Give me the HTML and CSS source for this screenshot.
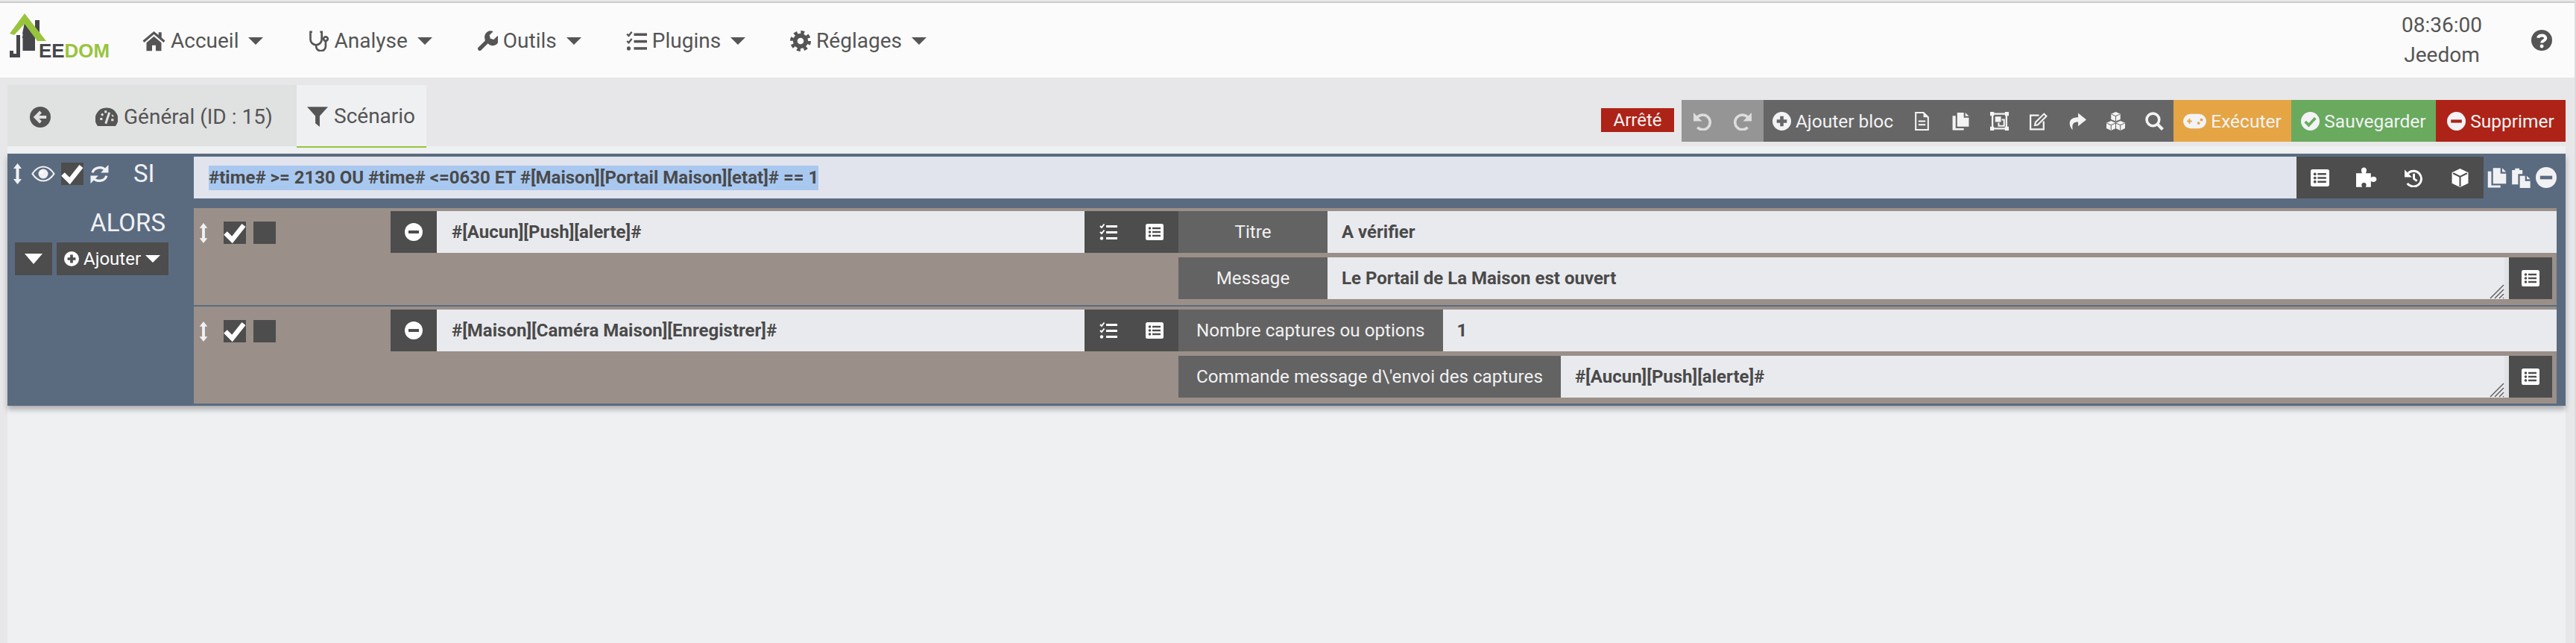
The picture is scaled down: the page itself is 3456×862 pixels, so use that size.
FILE: index.html
```html
<!DOCTYPE html>
<html lang="fr">
<head>
<meta charset="utf-8">
<title>Jeedom - Scénario</title>
<link rel="stylesheet" href="styles.css">
</head>
<body>
<svg class="defs" width="0" height="0" aria-hidden="true">
  <symbol id="i-home" viewBox="0 0 24 24"><path d="M12 1.5 0 11.5l1.6 2L12 4.8l10.4 8.7 1.6-2-3.8-3.2V2.5h-3.2v3.1zM12 7 4 13.7V22.5h6v-6h4v6h6v-8.8z"/></symbol>
  <symbol id="i-stetho" viewBox="0 0 24 24"><g class="ln" stroke-width="2.3"><path d="M5 1.5H3v8.5a6.5 6.5 0 0 0 13 0V1.5h-2"/><path d="M9.5 16.5v1.5a5.5 5.5 0 0 0 11 0v-5.5"/><circle cx="20.5" cy="9.5" r="2.4"/></g></symbol>
  <symbol id="i-wrench" viewBox="0 0 24 24"><path d="M23.5 6l-4.2 4.2-4-.9-1-4L18.5 1A7 7 0 0 0 9 9.5a7 7 0 0 0 .3 2L1.3 19.5a2.3 2.3 0 0 0 3.2 3.2l8-8A7 7 0 0 0 23.5 6z"/></symbol>
  <symbol id="i-tasks" viewBox="0 0 24 24"><g class="ln" stroke-width="2"><path d="M1 4l2 2 3.5-4.5"/><path d="M1 12l2 2 3.5-4.5"/></g><circle cx="3" cy="20.5" r="2.2"/><rect x="9" y="3" width="15" height="3"/><rect x="9" y="11" width="15" height="3"/><rect x="9" y="19" width="15" height="3"/></symbol>
  <symbol id="i-cog" viewBox="0 0 24 24"><circle class="ln" cx="12" cy="12" r="6.2" stroke-width="5"/><circle class="ln" cx="12" cy="12" r="10" stroke-width="4" stroke-dasharray="4 3.85"/></symbol>
  <symbol id="i-back" viewBox="0 0 24 24"><circle cx="12" cy="12" r="12"/><path class="ko" stroke-width="3.4" d="M19 12H7M12.5 6 6.5 12l6 6"/></symbol>
  <symbol id="i-tacho" viewBox="0 0 24 24"><path d="M12 2A12 12 0 0 0 2.4 21.5h19.2A12 12 0 0 0 12 2z"/><path class="ko" stroke-width="2.4" d="M11 19 15 7M5 14h2.5M6.5 8.5l1.7 1.7M11 5v2.5M19 10l-1 1M19.5 15H17"/></symbol>
  <symbol id="i-filter" viewBox="0 0 24 24"><path d="M0 1h24L14.500 11.500V24L9.500 20V11.500z"/></symbol>
  <symbol id="i-undo" viewBox="0 0 24 24"><path class="ln" stroke-width="3.400" d="M5 8a9.500 9.500 0 1 1 1 12"/><path d="M1 1v11h11z"/></symbol>
  <symbol id="i-redo" viewBox="0 0 24 24"><path class="ln" stroke-width="3.400" d="M19 8a9.500 9.500 0 1 0-1 12"/><path d="M23 1v11H12z"/></symbol>
  <symbol id="i-plus" viewBox="0 0 24 24"><circle cx="12" cy="12" r="12"/><path class="ko" stroke-width="4.400" d="M12 5.500v13M5.500 12h13"/></symbol>
  <symbol id="i-minus" viewBox="0 0 24 24"><circle cx="12" cy="12" r="12"/><path class="ko" stroke-width="4" d="M5 12h14"/></symbol>
  <symbol id="i-okc" viewBox="0 0 24 24"><circle cx="12" cy="12" r="12"/><path class="ko" stroke-width="3.600" d="M5.500 12.500l4.500 4.500 8.500-9"/></symbol>
  <symbol id="i-help" viewBox="0 0 24 24"><circle cx="12" cy="12" r="12"/><path class="ko" stroke-width="3.400" d="M7.800 9.200C8.200 5.500 16.500 5.300 16.500 9.500c0 3-4.400 2.800-4.400 5.500"/><circle class="kof" cx="12.100" cy="18.800" r="2.100"/></symbol>
  <symbol id="i-file" viewBox="0 0 24 24"><path class="ln" stroke-width="2" d="M4 1h10l6 6v16H4z"/><path d="M14 1l6 6h-6z"/><rect x="7.500" y="11" width="9" height="2"/><rect x="7.500" y="15.500" width="9" height="2"/></symbol>
  <symbol id="i-copy" viewBox="0 0 24 24"><path d="M7.500 1H16v6.500h6.500V19H7.500zM18 1l4.500 4.500H18zM1.500 5H5.500v16H16v2.500H1.500z"/></symbol>
  <symbol id="i-paste" viewBox="0 0 24 24"><path d="M1 3.500h3.500V1.500h5v2h3.500V8H8v12H1zM10 10h6v6h6v8H10zM18 10l4 4h-4z"/></symbol>
  <symbol id="i-ungroup" viewBox="0 0 24 24"><path class="ln" stroke-width="2.200" d="M3 2.500h18v19H3z"/><path d="M0 0h5v5H0zM19 0h5v5h-5zM0 19h5v5H0zM19 19h5v5h-5zM6.500 6H14v7H6.500z"/><path class="ln" stroke-width="2" d="M11 14v4h7v-8h-3"/></symbol>
  <symbol id="i-edit" viewBox="0 0 24 24"><path class="ln" stroke-width="2.200" d="M13 4.500H2v18h17V12"/><path class="ln" stroke-width="2" d="M8.500 13.500 19.500 2.500l3 3-11 11-3.800.8z"/></symbol>
  <symbol id="i-share" viewBox="0 0 24 24"><path d="M13.500 1.500 24 10l-10.500 8.500V13C8 13 5 15 6.500 23 1.500 19 -1 7 13.500 7z"/></symbol>
  <symbol id="i-cubes" viewBox="0 0 24 24"><path d="M12 0l6 2.600v6.900L12 12 6 9.500V2.600zM6 11.500l6 2.600 6-2.600 6 2.600v7L18 24l-6-2.900L6 24l-6-2.900v-7z"/><path class="ko" stroke-width="1" d="M6.500 3 12 5.500 17.500 3M12 5.500V11.500M.5 14.500 6 17l5.500-2.500M6 17v6.500M12.500 14.500 18 17l5.500-2.500M18 17v6.500M12 14v7"/></symbol>
  <symbol id="i-search" viewBox="0 0 24 24"><circle class="ln" cx="10" cy="10" r="8" stroke-width="3.500"/><path class="ln" stroke-width="4" d="M15.500 15.500 22.500 22.500"/></symbol>
  <symbol id="i-game" viewBox="0 0 24 24"><rect y="4.500" width="24" height="15" rx="7.500"/><path class="ko" stroke-width="1.600" d="M4 12h5M6.500 9.500v5"/><circle class="kof" cx="16" cy="14" r="1.500"/><circle class="kof" cx="19" cy="10.500" r="1.500"/></symbol>
  <symbol id="i-listalt" viewBox="0 0 24 24"><rect y="1" width="24" height="22" rx="2.500"/><g class="kof"><circle cx="5.500" cy="7" r="1.800"/><circle cx="5.500" cy="12" r="1.800"/><circle cx="5.500" cy="17" r="1.800"/><rect x="9" y="5.800" width="11" height="2.400"/><rect x="9" y="10.800" width="11" height="2.400"/><rect x="9" y="15.800" width="11" height="2.400"/></g></symbol>
  <symbol id="i-puzzle" viewBox="0 0 24 24"><path d="M0 7h7C5 4 6 .5 9 .5s4 3.500 2 6.500h6v5c3-2 6.500-1 6.500 2s-3.500 4-6.500 2v7h-6c1.500-3 .5-5-2-5s-3.500 2-2 5H0z"/></symbol>
  <symbol id="i-history" viewBox="0 0 24 24"><path class="ln" stroke-width="2.800" d="M5.500 6A10 10 0 1 1 4.500 19"/><path d="M1 1.500v9.500h9.500z"/><path class="ln" stroke-width="2.800" d="M13 6.500v6.500l4 3"/></symbol>
  <symbol id="i-cube" viewBox="0 0 24 24"><path d="M12 0l10.500 5v14L12 24 1.500 19V5z"/><path class="ko" stroke-width="2" d="M3 6l9 4.500L21 6M12 10.500V23"/></symbol>
  <symbol id="i-updown" viewBox="0 0 12 28"><path d="M6 0l5.500 7H8v14h3.500L6 28 .5 21H4V7H.5z"/></symbol>
  <symbol id="i-eye" viewBox="0 0 32 22"><path class="ln" stroke-width="2.200" d="M1.500 11C6 4 11 1.500 16 1.500S26 4 30.500 11C26 18 21 20.500 16 20.500S6 18 1.500 11z"/><circle cx="16" cy="11" r="6.500"/><circle class="kof" cx="13.500" cy="8.500" r="2.500"/></symbol>
  <symbol id="i-sync" viewBox="0 0 24 24"><path class="ln" stroke-width="3.200" d="M3 10C5 2.500 15.500 1.500 20 7M21 14c-2 7.500-12.500 8.500-17 3"/><path d="M23.500 0v10h-10zM.5 24V14h10z"/></symbol>
  <symbol id="i-check" viewBox="0 0 30 30"><path class="ln" stroke-width="6.400" d="M2.500 15.500l9 9L27 5"/></symbol>
</svg>

<header class="navbar">
  <a class="brand" href="#">
    <svg class="logo" viewBox="0 0 150 62" role="img" aria-label="Jeedom">
      <path class="logo-dark" d="M21 12 35 28V50H18V27zM35 9h6V30L35 24z"/>
      <path class="logo-dark" d="M10 29h5V59H1V50H6V54H10z"/>
      <rect class="logo-white" x="15" y="33" width="3.500" height="20"/>
      <rect class="logo-white" x="15" y="27" width="3.500" height="3.500"/>
      <path class="logo-green" d="M21 0 50 37H38L21 14 7 29 1 27z"/>
      <text class="logo-text" x="40" y="59" textLength="95" lengthAdjust="spacingAndGlyphs"><tspan class="logo-ee">EE</tspan><tspan class="logo-dom">DOM</tspan></text>
    </svg>
  </a>
  <nav class="menu">
    <a class="menu-item" href="#"><svg class="ic ic-home"><use href="#i-home"/></svg>Accueil<i class="caret"></i></a>
    <a class="menu-item" href="#"><svg class="ic ic-nav"><use href="#i-stetho"/></svg>Analyse<i class="caret"></i></a>
    <a class="menu-item" href="#"><svg class="ic ic-nav"><use href="#i-wrench"/></svg>Outils<i class="caret"></i></a>
    <a class="menu-item" href="#"><svg class="ic ic-nav"><use href="#i-tasks"/></svg>Plugins<i class="caret"></i></a>
    <a class="menu-item" href="#"><svg class="ic ic-nav"><use href="#i-cog"/></svg>Réglages<i class="caret"></i></a>
  </nav>
  <div class="clock"><div>08:36:00</div><div>Jeedom</div></div>
  <a class="help" href="#"><svg class="ic ic-help"><use href="#i-help"/></svg></a>
</header>

<main class="page">
  <div class="tabbar">
    <ul class="tabs">
      <li class="tab tab-back"><svg class="ic ic-back"><use href="#i-back"/></svg></li>
      <li class="tab tab-general"><svg class="ic ic-tacho"><use href="#i-tacho"/></svg>Général (ID : 15)</li>
      <li class="tab tab-active"><svg class="ic ic-filter"><use href="#i-filter"/></svg>Scénario</li>
    </ul>
    <span class="badge">Arrêté</span>
    <div class="toolbar">
      <div class="tb-group tb-muted">
        <button class="tb-icon tb-wide"><svg class="ic ic-tb"><use href="#i-undo"/></svg></button>
        <button class="tb-icon tb-wide"><svg class="ic ic-tb"><use href="#i-redo"/></svg></button>
      </div>
      <div class="tb-group tb-dark">
        <button class="tb-text tb-add"><svg class="ic ic-tb"><use href="#i-plus"/></svg>Ajouter bloc</button>
        <button class="tb-icon"><svg class="ic ic-tb"><use href="#i-file"/></svg></button>
        <button class="tb-icon"><svg class="ic ic-tb"><use href="#i-copy"/></svg></button>
        <button class="tb-icon"><svg class="ic ic-tb"><use href="#i-ungroup"/></svg></button>
        <button class="tb-icon"><svg class="ic ic-tb"><use href="#i-edit"/></svg></button>
        <button class="tb-icon"><svg class="ic ic-tb"><use href="#i-share"/></svg></button>
        <button class="tb-icon"><svg class="ic ic-tb"><use href="#i-cubes"/></svg></button>
        <button class="tb-icon"><svg class="ic ic-tb"><use href="#i-search"/></svg></button>
      </div>
      <button class="tb-text tb-run"><svg class="ic ic-game"><use href="#i-game"/></svg>Exécuter</button>
      <button class="tb-text tb-save"><svg class="ic ic-tb"><use href="#i-okc"/></svg>Sauvegarder</button>
      <button class="tb-text tb-del"><svg class="ic ic-tb"><use href="#i-minus"/></svg>Supprimer</button>
    </div>
  </div>

  <section class="panel">
    <div class="block">
      <div class="cond">
        <div class="cond-left">
          <svg class="ic ic-drag"><use href="#i-updown"/></svg>
          <svg class="ic ic-eye"><use href="#i-eye"/></svg>
          <span class="box"><svg class="ic ic-check"><use href="#i-check"/></svg></span>
          <svg class="ic ic-sync"><use href="#i-sync"/></svg>
          <span class="si">SI</span>
        </div>
        <div class="expr"><span class="selected">#time# &gt;= 2130 OU #time# &lt;=0630 ET #[Maison][Portail Maison][etat]# == 1</span></div>
        <div class="expr-btns">
          <span class="eb"><svg class="ic ic-eb"><use href="#i-listalt"/></svg></span>
          <span class="eb"><svg class="ic ic-puz"><use href="#i-puzzle"/></svg></span>
          <span class="eb"><svg class="ic ic-eb"><use href="#i-history"/></svg></span>
          <span class="eb"><svg class="ic ic-eb"><use href="#i-cube"/></svg></span>
        </div>
        <div class="block-tools">
          <svg class="ic ic-bt"><use href="#i-copy"/></svg>
          <svg class="ic ic-bt"><use href="#i-paste"/></svg>
          <svg class="ic ic-bm"><use href="#i-minus"/></svg>
        </div>
      </div>
      <div class="then">
        <div class="then-left">
          <div class="alors">ALORS</div>
          <div class="then-btns">
            <span class="tbtn tbtn-caret"><i class="caret caret-big"></i></span>
            <span class="tbtn tbtn-add"><svg class="ic ic-add"><use href="#i-plus"/></svg>Ajouter<i class="caret caret-add"></i></span>
          </div>
        </div>
        <div class="actions">
          <div class="action">
            <div class="act-ctl">
              <svg class="ic ic-drag"><use href="#i-updown"/></svg>
              <span class="box box-a"><svg class="ic ic-check"><use href="#i-check"/></svg></span>
              <span class="box box-b"></span>
            </div>
            <span class="rm"><svg class="ic ic-rm"><use href="#i-minus"/></svg></span>
            <div class="cmd">#[Aucun][Push][alerte]#</div>
            <div class="cmd-btns">
              <svg class="ic ic-cb"><use href="#i-tasks"/></svg>
              <svg class="ic ic-cb"><use href="#i-listalt"/></svg>
            </div>
            <div class="params">
              <div class="param">
                <label class="lbl lbl-fixed">Titre</label>
                <div class="val">A vérifier</div>
              </div>
              <div class="param">
                <label class="lbl lbl-fixed">Message</label>
                <div class="val val-area">Le Portail de La Maison est ouvert
                  <svg class="grip" viewBox="0 0 20 20"><path d="M19 1 1 19M19 7 7 19M19 13 13 19M19 18 18 19"/></svg>
                </div>
                <span class="side"><svg class="ic ic-side"><use href="#i-listalt"/></svg></span>
              </div>
            </div>
          </div>
          <div class="action action-next">
            <div class="act-ctl">
              <svg class="ic ic-drag"><use href="#i-updown"/></svg>
              <span class="box box-a"><svg class="ic ic-check"><use href="#i-check"/></svg></span>
              <span class="box box-b"></span>
            </div>
            <span class="rm"><svg class="ic ic-rm"><use href="#i-minus"/></svg></span>
            <div class="cmd">#[Maison][Caméra Maison][Enregistrer]#</div>
            <div class="cmd-btns">
              <svg class="ic ic-cb"><use href="#i-tasks"/></svg>
              <svg class="ic ic-cb"><use href="#i-listalt"/></svg>
            </div>
            <div class="params">
              <div class="param">
                <label class="lbl">Nombre captures ou options</label>
                <div class="val">1</div>
              </div>
              <div class="param">
                <label class="lbl">Commande message d\'envoi des captures</label>
                <div class="val val-area">#[Aucun][Push][alerte]#
                  <svg class="grip" viewBox="0 0 20 20"><path d="M19 1 1 19M19 7 7 19M19 13 13 19M19 18 18 19"/></svg>
                </div>
                <span class="side"><svg class="ic ic-side"><use href="#i-listalt"/></svg></span>
              </div>
            </div>
          </div>
        </div>
      </div>
    </div>
  </section>
</main>
</body>
</html>
```

FILE: styles.css
```css
* { box-sizing: border-box; }
html, body { margin: 0; height: 100%; }
body {
  background: #e7e7e9;
  color: #555;
  font-family: Roboto, "Liberation Sans", sans-serif;
  font-size: 24px;
  overflow: hidden;
  display: flex;
  flex-direction: column;
  border-right: 2px solid #dcdcdc;
  --ko: #fff;
}
.defs { position: absolute; }
.ic { display: block; flex: none; fill: currentColor; }
.ln { fill: none; stroke: currentColor; }
.ko { fill: none; stroke: var(--ko); }
.kof { fill: var(--ko); }
a { color: inherit; text-decoration: none; }
button { border: 0; margin: 0; padding: 0; font: inherit; color: inherit; background: none; }

/* navbar */
.navbar {
  flex: none;
  height: 102px;
  margin-top: 2px;
  border-top: 2px solid #ccc;
  background: #fbfbfb;
  display: flex;
  align-items: center;
  padding-left: 12px;
  padding-right: 30px;
  font-size: 28px;
}
.brand { display: block; flex: none; width: 150px; height: 62px; margin-top: -10px; }
.logo { display: block; width: 150px; height: 62px; overflow: visible; }
.logo-dark { fill: #47464b; }
.logo-white { fill: #fbfbfb; }
.logo-green { fill: #98c43c; }
.logo-text { font-family: "Liberation Sans", sans-serif; font-weight: 700; font-size: 25px; }
.logo-ee { fill: #47464b; }
.logo-dom { fill: #98c43c; }
.menu { display: flex; gap: 60px; margin-left: 29px; margin-top: 2px; flex: 1; }
.menu-item { display: flex; align-items: center; gap: 7px; line-height: 40px; }
.ic-nav { width: 28px; height: 28px; }
.ic-home { width: 31px; height: 30px; }
.caret {
  display: block;
  flex: none;
  width: 0; height: 0;
  margin-left: 6px;
  border-left: 10px solid transparent;
  border-right: 10px solid transparent;
  border-top: 10px solid currentColor;
}
.clock { width: 110px; text-align: center; line-height: 40px; font-size: 28px; margin-right: 65px; white-space: nowrap; }
.help { display: block; }
.ic-help { width: 28px; height: 28px; }

/* tab bar */
.page { flex: 1; display: flex; flex-direction: column; padding: 10px 12px 0 10px; min-height: 0; }
.tabbar { flex: none; display: flex; align-items: flex-start; height: 82px; }
.tabs { display: flex; list-style: none; margin: 0 auto 0 0; padding: 0; height: 82px; background: #e0e1e1; font-size: 28px; }
.tab { display: flex; align-items: center; gap: 8px; height: 82px; padding-top: 3px; --ko: #e0e1e1; }
.tab-back { width: 118px; padding-left: 30px; }
.tab-general { width: 270px; }
.tab-active {
  position: relative;
  z-index: 1;
  width: 174px;
  height: 84px;
  padding: 3px 14px 2px 14px;
  background: #eff0f2;
  border-bottom: 2px solid #98c43c;
  --ko: #eff0f2;
}
.ic-back { width: 28px; height: 28px; }
.ic-tacho { width: 30px; height: 30px; }
.ic-filter { width: 28px; height: 28px; }
.badge {
  margin: 31px 10px 0 0;
  width: 98px; height: 32px;
  line-height: 32px;
  text-align: center;
  background: #ae2317;
  color: #f2f2f2;
  font-size: 24px;
}
.toolbar { display: flex; height: 56px; margin-top: 20px; color: #f3f3f5; font-size: 24.5px; }
.tb-group { display: flex; height: 56px; }
.tb-muted { background: #959595; color: #ddd; }
.tb-dark { background: #666; --ko: #666; }
.tb-icon { display: flex; align-items: center; justify-content: center; width: 52px; height: 56px; }
.tb-wide { width: 55px; }
.tb-text { display: flex; align-items: center; justify-content: center; gap: 6px; height: 56px; padding-top: 1px; }
.ic-tb { width: 25px; height: 25px; }
.ic-game { width: 31px; height: 31px; }
.tb-add { width: 186px; --ko: #666; }
.tb-run { width: 158px; background: #e5a545; --ko: #e5a545; }
.tb-save { width: 194px; background: #69aa5e; --ko: #69aa5e; }
.tb-del { width: 174px; background: #ae2317; --ko: #ae2317; }

/* scenario block */
.panel { flex: 1; background: #eff0f2; padding-top: 10px; }
.block { background: #5a6b80; padding: 4px 12px 3px 0; box-shadow: 0 5px 7px rgba(0, 0, 0, .28); color: #f1f1f4; }
.cond { display: flex; height: 56px; }
.cond-left { flex: none; width: 250px; height: 30px; margin-top: 8px; padding-left: 7px; display: flex; align-items: center; }
.ic-drag { width: 13px; height: 28px; }
.ic-eye { width: 32px; height: 22px; margin-left: 12px; }
.box { display: flex; align-items: center; justify-content: center; width: 30px; height: 30px; background: #4d4d4d; color: #fff; flex: none; }
.cond-left .box { margin-left: 8px; }
.ic-check { width: 30px; height: 30px; }
.ic-sync { width: 25px; height: 25px; margin-left: 9px; }
.si { margin-left: 33px; font-size: 33px; line-height: 30px; }
.expr { flex: 1; background: #e1e4ec; padding: 12px 0 0 20px; color: #4a4a4a; }
.selected { display: inline-block; background: #a9c8f0; height: 33px; line-height: 33px; font-weight: 700; font-size: 24px; white-space: nowrap; }
.expr-btns { flex: none; width: 251px; display: flex; background: #4d4d4d; color: #fff; --ko: #4d4d4d; }
.eb { flex: 1; display: flex; align-items: center; justify-content: center; }
.ic-eb { width: 25px; height: 25px; }
.ic-puz { width: 28px; height: 28px; }
.block-tools { flex: none; width: 98px; display: flex; align-items: center; gap: 5px; padding-left: 4px; --ko: #5a6b80; }
.ic-bt { width: 28px; height: 28px; }
.ic-bm { width: 28px; height: 28px; }

.then { display: flex; margin-top: 13px; }
.then-left { flex: none; width: 250px; padding-left: 10px; }
.alors { text-align: right; padding-right: 38px; font-size: 33px; line-height: 40px; }
.then-btns { display: flex; gap: 6px; margin-top: 6px; }
.tbtn { display: flex; align-items: center; height: 44px; background: #4d4d4d; color: #fff; --ko: #4d4d4d; }
.tbtn-caret { width: 50px; justify-content: center; }
.caret-big { margin: 0; border-left-width: 12px; border-right-width: 12px; border-top-width: 14px; }
.tbtn-add { width: 150px; padding-left: 10px; font-size: 24px; gap: 6px; }
.ic-add { width: 20px; height: 20px; }
.caret-add { margin-left: 0; }

.actions { flex: 1; min-width: 0; }
.action { display: flex; align-items: flex-start; background: #9a9089; padding: 4px 0 8px; }
.action-next { border-top: 2px solid #5a6b80; }
.act-ctl { flex: none; width: 264px; display: flex; align-items: center; padding: 14px 0 0 7px; }
.act-ctl .ic-drag { width: 12px; height: 27px; }
.box-a { margin-left: 21px; }
.box-b { margin-left: 10px; }
.rm { flex: none; width: 62px; height: 56px; display: flex; align-items: center; justify-content: center; background: #4d4d4d; color: #fff; --ko: #4d4d4d; }
.ic-rm { width: 24px; height: 24px; }
.cmd { flex: none; width: 869px; height: 56px; line-height: 56px; padding-left: 20px; background: #e9eaee; color: #4a4a4a; font-weight: 700; font-size: 24px; }
.cmd-btns { flex: none; width: 126px; height: 56px; display: flex; align-items: center; gap: 38px; padding-left: 20px; background: #4d4d4d; color: #fff; --ko: #4d4d4d; }
.ic-cb { width: 24px; height: 24px; }
.params { flex: 1; min-width: 0; display: flex; flex-direction: column; gap: 6px; }
.param { display: flex; height: 56px; }
.lbl { flex: none; padding: 0 24px; line-height: 56px; background: #636363; color: #f1f1f1; font-size: 24.2px; white-space: nowrap; }
.lbl-fixed { width: 200px; padding: 0; text-align: center; }
.val { flex: 1; min-width: 0; position: relative; line-height: 56px; padding-left: 19px; background: #e9eaee; color: #4a4a4a; font-weight: 700; font-size: 24px; }
.val-area { border-right: 6px solid #e0e2e6; }
.grip { position: absolute; right: 0; bottom: 0; width: 20px; height: 20px; fill: none; stroke: #666; stroke-width: 1.6; }
.side { flex: none; width: 58px; margin-right: 6px; display: flex; align-items: center; justify-content: center; background: #4d4d4d; color: #fff; --ko: #4d4d4d; }
.ic-side { width: 24px; height: 24px; }
```
